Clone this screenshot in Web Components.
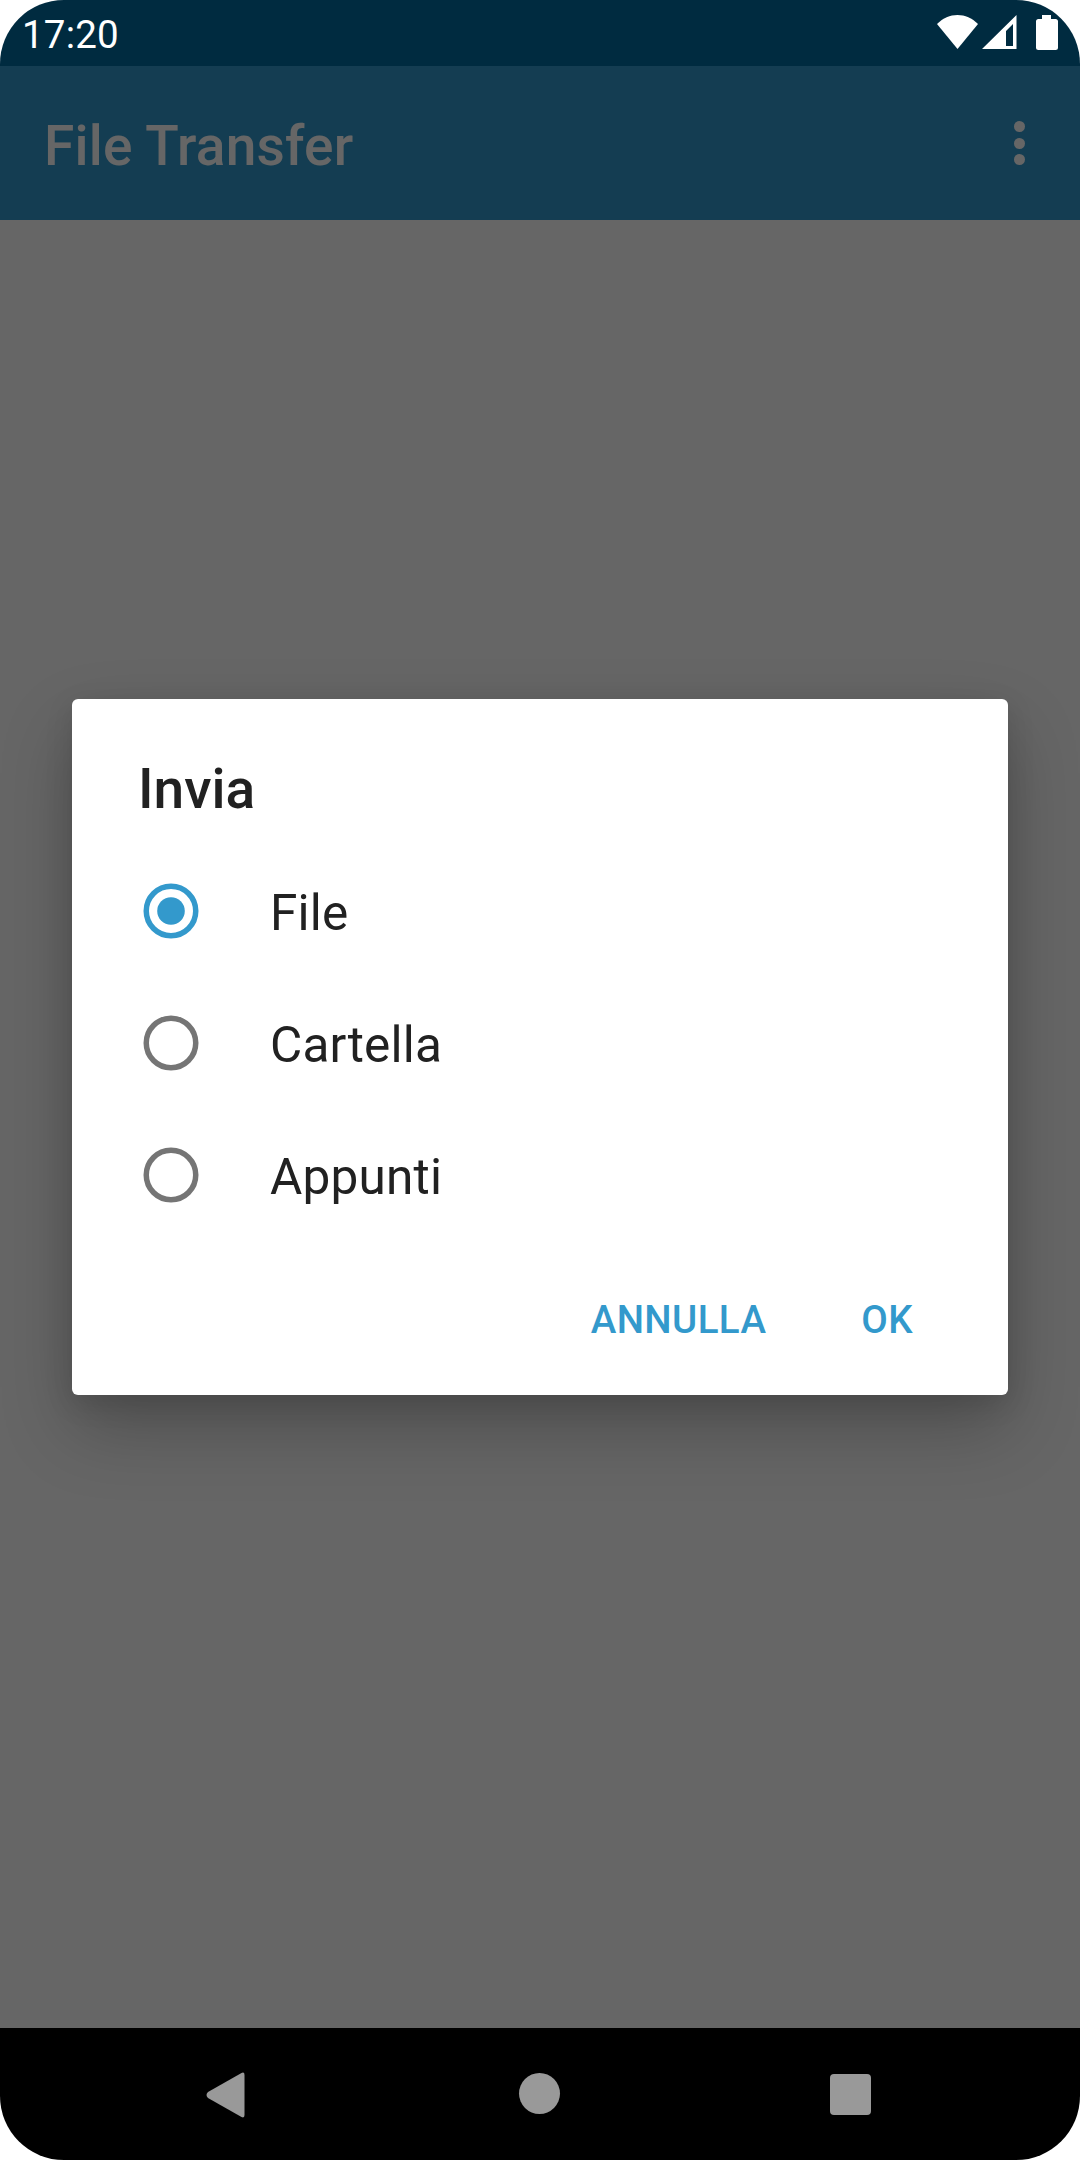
<!DOCTYPE html>
<html lang="it">
<head>
<meta charset="utf-8">
<title>File Transfer</title>
<style>
html, body { margin: 0; padding: 0; background: #fff; }
body { font-family: Roboto, "Noto Sans", sans-serif; }
</style>
</head>
<body>
<phone-screen>
    <status-bar slot="status" time="17:20"></status-bar>
    <app-bar slot="bar">File Transfer</app-bar>
    <choice-dialog slot="dialog">
        <span slot="title">Invia</span>
        <radio-row checked>File</radio-row>
        <radio-row>Cartella</radio-row>
        <radio-row>Appunti</radio-row>
        <dialog-button slot="actions">ANNULLA</dialog-button>
        <dialog-button slot="actions">OK</dialog-button>
    </choice-dialog>
    <nav-bar slot="nav"></nav-bar>
</phone-screen>
<script>
function mkTmplt(innerHtml) {
    var tmplt = document.createElement("template");
    tmplt.innerHTML = innerHtml;
    return tmplt;
}
class Base extends HTMLElement {
    constructor() {
        super();
        const shadow = this.attachShadow({ mode: "open" });
        shadow.append(this.constructor._tmplt.content.cloneNode(true));
    }
}
class PhoneScreen extends Base {}
PhoneScreen._tmplt = mkTmplt(`
        <div id="frame">
            <slot name="status"></slot>
            <slot name="bar"></slot>
            <div id="body"></div>
            <slot name="nav"></slot>
            <div id="scrim"><slot name="dialog"></slot></div>
        </div>
        <style>
            :host{
                display: block;
                width: 1080px;
                height: 2160px;
            }
            #frame{
                position: relative;
                display: flex;
                flex-direction: column;
                height: 100%;
                border-radius: 64px;
                overflow: hidden;
                background: #fff;
            }
            #body{
                flex: 1;
                background: #fff;
            }
            #scrim{
                position: absolute;
                left: 0;
                right: 0;
                top: 66px;
                bottom: 132px;
                display: flex;
                align-items: center;
                justify-content: center;
                background: rgba(0, 0, 0, .6);
            }
        </style>
    `);
class StatusBar extends Base {
    connectedCallback() {
        this.shadowRoot.querySelector("#time").textContent = this.getAttribute("time");
    }
}
StatusBar._tmplt = mkTmplt(`
        <span id="time"></span>
        <svg id="wifi" width="41" height="34" viewBox="0 0 41 34"><path d="M20.5 34L0 9C6 3 13 0 20.5 0S35 3 41 9Z"/></svg>
        <svg id="signal" width="35" height="34" viewBox="0 0 35 34"><path fill-rule="evenodd" d="M34.500 0V34H0ZM31 9L24 16V31H31Z"/></svg>
        <svg id="battery" width="22" height="35" viewBox="0 0 22 35"><path d="M6 0H15V4H19.500Q22 4 22 6.500V32.500Q22 35 19.500 35H2.500Q0 35 0 32.500V6.500Q0 4 2.500 4H6Z"/></svg>
        <style>
            :host{
                display: flex;
                align-items: flex-start;
                height: 66px;
                padding-left: 22px;
                background: #002b40;
                color: #fff;
                font: 400 38.500px/66px Roboto, sans-serif;
            }
            #time{
                flex: 1;
                padding-top: 2px;
                letter-spacing: .2px;
            }
            svg{
                fill: #fff;
                margin-top: 15px;
            }
            #signal{ margin-left: 3.500px; }
            #battery{ margin-left: 19.500px; margin-right: 22px; }
        </style>
    `);
class AppBar extends Base {}
AppBar._tmplt = mkTmplt(`
        <span id="title"><slot></slot></span>
        <span id="more"><i></i><i></i><i></i></span>
        <style>
            :host{
                display: flex;
                align-items: center;
                height: 154px;
                padding: 0 55px 0 44px;
                background: #3399cc;
                color: #fff;
                font: 500 55px/1 Roboto, sans-serif;
            }
            #title{
                flex: 1;
                padding-top: 6px;
                letter-spacing: .22px;
            }
            #more{
                display: flex;
                flex-direction: column;
                gap: 5.500px;
            }
            #more i{
                display: block;
                width: 11px;
                height: 11px;
                border-radius: 50%;
                background: #fff;
            }
        </style>
    `);
class ChoiceDialog extends Base {}
ChoiceDialog._tmplt = mkTmplt(`
        <h2><slot name="title"></slot></h2>
        <div id="rows"><slot></slot></div>
        <div id="actions"><slot name="actions"></slot></div>
        <style>
            :host{
                display: block;
                width: 936px;
                height: 696px;
                box-sizing: border-box;
                background: #fff;
                border-radius: 6px;
                box-shadow: 0 33px 72px rgba(0, 0, 0, .24), 0 8px 28px rgba(0, 0, 0, .12);
            }
            h2{
                margin: 0;
                padding: 57.500px 66px 0;
                height: 74px;
                color: #212121;
                font: 500 55px/64px Roboto, sans-serif;
            }
            #rows{
                padding-top: 14px;
            }
            #actions{
                display: flex;
                justify-content: flex-end;
                gap: 51px;
                padding: 29.500px 73px 0 22px;
            }
        </style>
    `);
class RadioRow extends Base {}
RadioRow._tmplt = mkTmplt(`
        <svg id="radio" width="56" height="56" viewBox="0 0 56 56">
            <circle id="ring" cx="28" cy="28" r="24.750" fill="none" stroke-width="5.500"/>
            <circle id="dot" cx="28" cy="28" r="13.800"/>
        </svg>
        <span id="label"><slot></slot></span>
        <style>
            :host{
                display: flex;
                align-items: center;
                height: 132px;
                padding-left: 71px;
                color: #212121;
                font: 400 49.500px/1 Roboto, sans-serif;
                letter-spacing: .2px;
            }
            #ring{ stroke: #757575; }
            #dot{ fill: none; }
            #label{
                margin-left: 71px;
                padding-top: 7px;
            }
            :host([checked]) #ring{ stroke: #3399cc; }
            :host([checked]) #dot{ fill: #3399cc; }
        </style>
    `);
class DialogButton extends Base {}
DialogButton._tmplt = mkTmplt(`
        <slot></slot>
        <style>
            :host{
                display: block;
                padding: 0 22px;
                height: 99px;
                color: #3399cc;
                font: 500 38.500px/99px Roboto, sans-serif;
                letter-spacing: .4px;
            }
        </style>
    `);
class NavBar extends Base {}
NavBar._tmplt = mkTmplt(`
        <svg id="back" width="39" height="46" viewBox="0 0 39 46"><path d="M38.500 3V43Q38.500 46.500 35.500 45L2 26Q-1 23 2 20L35.500 1Q38.500 -.500 38.500 3Z"/></svg>
        <span id="home"></span>
        <span id="recent"></span>
        <style>
            :host{
                display: flex;
                align-items: flex-start;
                justify-content: space-between;
                height: 132px;
                padding: 44px 209px 0 206px;
                box-sizing: border-box;
                background: #000;
            }
            svg{ fill: #999; }
            #home{
                width: 41px;
                height: 41px;
                margin: 1px 0 0 4px;
                border-radius: 50%;
                background: #999;
            }
            #recent{
                width: 41px;
                height: 41px;
                margin-top: 2px;
                border-radius: 4px;
                background: #999;
            }
        </style>
    `);
customElements.define("phone-screen", PhoneScreen);
customElements.define("status-bar", StatusBar);
customElements.define("app-bar", AppBar);
customElements.define("choice-dialog", ChoiceDialog);
customElements.define("radio-row", RadioRow);
customElements.define("dialog-button", DialogButton);
customElements.define("nav-bar", NavBar);
</script>
</body>
</html>
